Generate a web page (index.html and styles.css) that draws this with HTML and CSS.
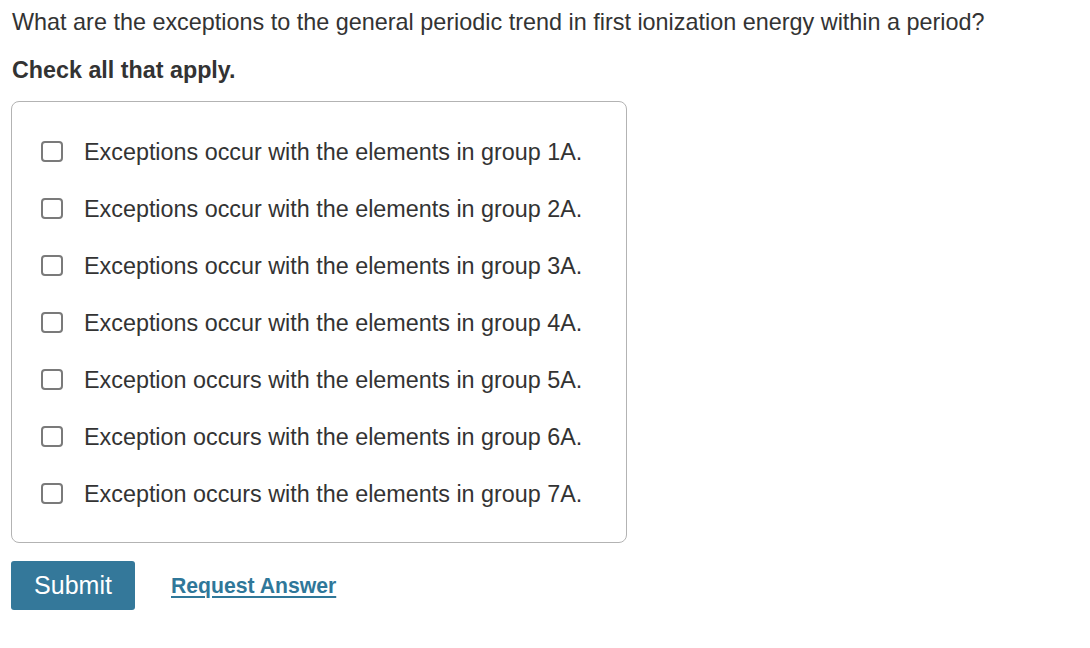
FILE: index.html
```html
<!DOCTYPE html>
<html>
<head>
<meta charset="utf-8">
<link rel="stylesheet" href="styles.css">
</head>
<body>
<div class="page">
  <p class="question">What are the exceptions to the general periodic trend in first ionization energy within a period?</p>
  <p class="instruction">Check all that apply.</p>
  <div class="options">
    <label class="option"><span class="box"></span><span class="label">Exceptions occur with the elements in group 1A.</span></label>
    <label class="option"><span class="box"></span><span class="label">Exceptions occur with the elements in group 2A.</span></label>
    <label class="option"><span class="box"></span><span class="label">Exceptions occur with the elements in group 3A.</span></label>
    <label class="option"><span class="box"></span><span class="label">Exceptions occur with the elements in group 4A.</span></label>
    <label class="option"><span class="box"></span><span class="label">Exception occurs with the elements in group 5A.</span></label>
    <label class="option"><span class="box"></span><span class="label">Exception occurs with the elements in group 6A.</span></label>
    <label class="option"><span class="box"></span><span class="label">Exception occurs with the elements in group 7A.</span></label>
  </div>
  <div class="actions">
    <button class="submit">Submit</button>
    <a class="request" href="#">Request Answer</a>
  </div>
</div>
</body>
</html>
```
FILE: styles.css
```css
html, body {
  margin: 0;
  padding: 0;
  background: #fff;
}
body {
  font-family: "Liberation Sans", Arial, Helvetica, sans-serif;
  color: #333;
}
.page {
  padding: 10px 0 0 11px;
  width: 616px;
}
.question {
  margin: 0;
  padding-left: 1px;
  font-size: 23.4px;
  line-height: 24px;
  white-space: nowrap;
}
.instruction {
  margin: 24px 0 0;
  padding-left: 1px;
  font-size: 23.3px;
  line-height: 24px;
  font-weight: bold;
}
.options {
  margin-top: 19px;
  border: 1px solid #b3b3b3;
  border-radius: 8px;
  padding: 21px 0 20px 29px;
}
.option {
  display: flex;
  align-items: center;
  height: 57px;
}
.box {
  width: 18px;
  height: 17px;
  border: 2px solid #7a7a7a;
  border-radius: 4px;
  flex: none;
  background: #fff;
}
.label {
  margin-left: 21px;
  font-size: 23.35px;
  line-height: 24px;
  white-space: nowrap;
}
.actions {
  margin-top: 18px;
  display: flex;
  align-items: center;
}
.submit {
  width: 124px;
  height: 49px;
  border: none;
  border-radius: 3px;
  background: #34789a;
  color: #fff;
  font-family: "Liberation Sans", Arial, Helvetica, sans-serif;
  font-size: 25px;
  padding: 0;
}
.request {
  margin-left: 36px;
  color: #2f7799;
  font-weight: bold;
  font-size: 21.2px;
  text-decoration: underline;
  text-underline-offset: 3px;
}
```
